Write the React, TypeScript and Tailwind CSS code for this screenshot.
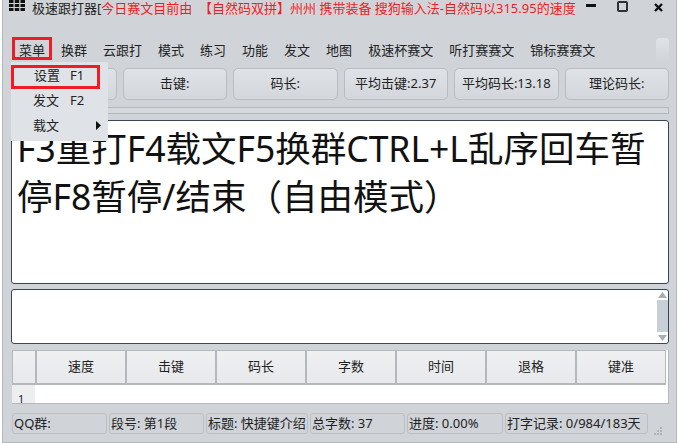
import React from 'react';

const MENUS = ['菜单', '换群', '云跟打', '模式', '练习', '功能', '发文', '地图', '极速杯赛文', '听打赛赛文', '锦标赛赛文'];
const STATS = ['', '击键:', '码长:', '平均击键:2.37', '平均码长:13.18', '理论码长:'];
const HEADERS = ['速度', '击键', '码长', '字数', '时间', '退格', '键准'];
const STATUS = [
  { text: 'QQ群:', w: 'w-[95px]' },
  { text: '段号: 第1段', w: 'w-[95px]' },
  { text: '标题: 快捷键介绍', w: 'w-[102px]' },
  { text: '总字数: 37', w: 'w-[95px]' },
  { text: '进度: 0.00%', w: 'w-[96px]' },
  { text: '打字记录: 0/984/183天', w: 'w-[143px]' },
];

export default function App() {
  return (
    <div className="relative w-[682px] h-[443px] overflow-hidden bg-white text-[13px] text-[#222] font-['Noto_Sans','Noto_Sans_CJK_SC',sans-serif]">
      <div className="flex flex-col ml-[2px] w-[675px] h-[443px] border-x border-b border-[#b4b8bc] bg-[#d0d4d9]">
        {/* Title bar */}
        <div className="flex items-center h-[18px] shrink-0 pl-[6px]">
          <svg width="16" height="11" viewBox="0 0 16 11" className="shrink-0 mr-[7px] -mt-[7px]" fill="#111">
            <rect x="0" y="0" width="4.5" height="3" /><rect x="5.75" y="0" width="4.5" height="3" /><rect x="11.5" y="0" width="4.5" height="3" />
            <rect x="0" y="4" width="4.5" height="3" /><rect x="5.75" y="4" width="4.5" height="3" /><rect x="11.5" y="4" width="4.5" height="3" />
            <rect x="0" y="8" width="4.5" height="3" /><rect x="5.75" y="8" width="4.5" height="3" /><rect x="11.5" y="8" width="4.5" height="3" />
          </svg>
          <span className="whitespace-pre">
            极速跟打器[<span className="text-[#f01c24]">今日赛文目前由  【自然码双拼】州州 携带装备 搜狗输入法-自然码以315.95的速度</span>
          </span>
        </div>

        {/* Menu bar */}
        <div className="flex items-center h-[50px] shrink-0 pt-[16px] pl-[16px] gap-[16px]">
          {MENUS.map((m) => (
            <span key={m} className="whitespace-nowrap">{m}</span>
          ))}
        </div>

        {/* Stat buttons */}
        <div className="flex h-[32px] shrink-0 ml-[9px] mr-[7px] gap-[6px]">
          {STATS.map((s, i) => (
            <div key={i} className="flex-1 flex items-center justify-center rounded-[5px] border border-[#b9bdc2] bg-gradient-to-b from-[#dfe2e6] to-[#d3d6db] whitespace-nowrap">
              {s}
            </div>
          ))}
        </div>

        {/* Thin progress bar */}
        <div className="h-[7px] shrink-0 mt-[7px] ml-[9px] mr-[7px] border border-[#b4b8bc] bg-[#d5d8dc]" />

        {/* Text being typed */}
        <div className="h-[164px] shrink-0 mt-[6px] ml-[8px] mr-[7px] overflow-hidden rounded-[3px] border border-[#3a4656] bg-white">
          <p className="mt-[3px] pl-[5px] pr-[4px] text-[35.5px] leading-[48px] text-[#111]">
            F3重打F4载文F5换群CTRL+L乱序回车暂停F8暂停/结束（自由模式）
          </p>
        </div>

        {/* Input area */}
        <div className="flex justify-end h-[55px] shrink-0 mt-[5px] ml-[8px] mr-[7px] rounded-[3px] border border-[#3a4656] bg-white">
          <div className="flex flex-col items-center w-[11px]">
            <svg width="9" height="10" viewBox="0 0 9 10" className="shrink-0"><path d="M4.5 2 L9 8 H0 Z" fill="#a8aeb4" /></svg>
            <div className="w-full h-[32px] bg-[#c9cfd6]" />
            <svg width="9" height="10" viewBox="0 0 9 10" className="shrink-0 mt-auto"><path d="M0 2 H9 L4.5 8 Z" fill="#a8aeb4" /></svg>
          </div>
        </div>

        {/* Result table */}
        <div className="h-[54px] shrink-0 mt-[6px] ml-[9px] mr-[7px] overflow-hidden border-b border-r border-[#b4b8bc] bg-white">
          <div className="flex h-[35px] mr-[2px] border-t border-l border-[#b4b8bc] bg-gradient-to-b from-[#eff0f2] to-[#e7e8eb]">
            <div className="w-[24px] shrink-0 border-r-2 border-b-2 border-[#b4b8bc]" />
            {HEADERS.map((h) => (
              <div key={h} className="flex-1 flex items-center justify-center border-r-2 border-b-2 border-[#b4b8bc] last:border-r">
                {h}
              </div>
            ))}
          </div>
          <div className="w-[23px] h-[19px] pl-[6px] bg-[#eceef0] text-[11px] leading-[28px] text-[#223]">1</div>
        </div>

        {/* Status bar */}
        <div className="flex items-end h-[21px] shrink-0 mt-[9px] ml-[9px]">
          <div className="flex h-[21px] gap-[2px]">
            {STATUS.map((s) => (
              <div key={s.text} className={`${s.w} shrink-0 flex items-center pl-[1px] rounded-[3px] border border-[#bcc0c5] whitespace-nowrap overflow-hidden`}>
                {s.text}
              </div>
            ))}
          </div>
          <svg width="9" height="8" viewBox="0 0 9 8" className="ml-[6px] -mb-[1px]" fill="#b0b4b9">
            <rect x="6" y="0" width="2" height="2" /><rect x="3" y="3" width="2" height="2" /><rect x="6" y="3" width="2" height="2" />
            <rect x="0" y="6" width="2" height="2" /><rect x="3" y="6" width="2" height="2" /><rect x="6" y="6" width="2" height="2" />
          </svg>
        </div>
      </div>

      {/* Open menu */}
      <div className="absolute left-[11px] top-[62px] w-[97px] h-[79px] pt-[2px] bg-[#dfe2e6]">
        <div className="flex items-center h-[24px] pl-[23px]">设置<span className="ml-[10px]">F1</span></div>
        <div className="flex items-center h-[26px] pl-[22px]">发文<span className="ml-[11px]">F2</span></div>
        <div className="flex items-center h-[24px] pl-[22px] pr-[7px]">
          载文
          <svg width="5" height="9" viewBox="0 0 5 9" className="ml-auto -mt-[2px]"><path d="M0 0 L5 4.5 L0 9 Z" fill="#111" /></svg>
        </div>
      </div>

      {/* Red annotation boxes */}
      <div className="absolute left-[12px] top-[37px] w-[40px] h-[23px] border-[3px] border-[#ee1c25]" />
      <div className="absolute left-[11px] top-[65px] w-[89px] h-[24px] border-[3px] border-[#ee1c25]" />

      {/* Window buttons */}
      <div className="absolute left-[586px] top-[4px] w-[10px] h-[3px] bg-[#111]" />
      <div className="absolute left-[617px] top-[1px] w-[11px] h-[11px] rounded-[2px] border-2 border-[#2c3138]" />
      <svg width="9" height="9" viewBox="0 0 9 9" className="absolute left-[654px] top-[3px]">
        <path d="M1 1 L8 8 M8 1 L1 8" stroke="#111" strokeWidth="2.4" />
      </svg>
      {/* Menu bar scroll handle */}
      <div className="absolute left-[656px] top-[38px] w-[13px] h-[24px] rounded-t-[4px] bg-gradient-to-b from-[#e0e3e7] to-[#d0d4d9]" />
    </div>
  );
}
